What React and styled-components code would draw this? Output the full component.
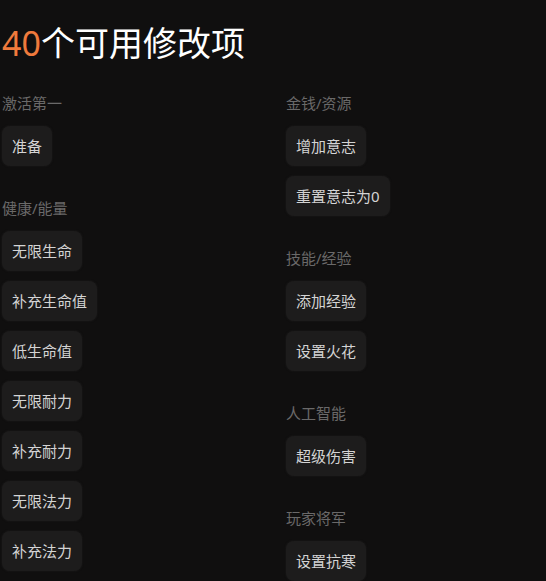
import React from "react";
import styled, { createGlobalStyle } from "styled-components";

const Global = createGlobalStyle`
  html, body { margin: 0; padding: 0; background: #100f0f; overflow: hidden; }
  body { font-family: "Noto Sans", "Noto Sans CJK SC", sans-serif; color: #d6d6d6; }
`;

const Page = styled.div`
  padding: 23px 2px 0 2px;
  height: 581px;
  box-sizing: border-box;
  background: #100f0f;
  overflow: hidden;
`;

const Title = styled.h1`
  margin: 0 0 29px 0;
  font-size: 34px;
  line-height: 41px;
  font-weight: 400;
  color: #ffffff;
`;

const Count = styled.span`
  color: #f07a3c;
`;

const Columns = styled.div`
  display: grid;
  grid-template-columns: 284px 1fr;
  align-items: start;
`;

const Column = styled.div`
  display: flex;
  flex-direction: column;
  gap: 22px;
`;

const Section = styled.section`
  display: flex;
  flex-direction: column;
  align-items: flex-start;
`;

const Label = styled.div`
  font-size: 15px;
  line-height: 20px;
  color: #6a6969;
  margin-bottom: 13px;
`;

const Button = styled.button`
  height: 40px;
  padding: 0 10px;
  margin-bottom: 10px;
  border: none;
  border-radius: 8px;
  background: #1d1c1c;
  box-shadow: 0 0 2px rgba(40, 40, 40, 0.6);
  color: #d4d4d4;
  font-family: inherit;
  font-size: 15px;
  line-height: 40px;
  cursor: pointer;
`;

const left = [
  { title: "激活第一", items: ["准备"] },
  {
    title: "健康/能量",
    items: ["无限生命", "补充生命值", "低生命值", "无限耐力", "补充耐力", "无限法力", "补充法力"],
  },
];

const right = [
  { title: "金钱/资源", items: ["增加意志", "重置意志为0"] },
  { title: "技能/经验", items: ["添加经验", "设置火花"] },
  { title: "人工智能", items: ["超级伤害"] },
  { title: "玩家将军", items: ["设置抗寒"] },
];

const renderColumn = (sections) => (
  <Column>
    {sections.map((s) => (
      <Section key={s.title}>
        <Label>{s.title}</Label>
        {s.items.map((it) => (
          <Button key={it}>{it}</Button>
        ))}
      </Section>
    ))}
  </Column>
);

export default function App() {
  return (
    <>
      <Global />
      <Page>
        <Title>
          <Count>40</Count>个可用修改项
        </Title>
        <Columns>
          {renderColumn(left)}
          {renderColumn(right)}
        </Columns>
      </Page>
    </>
  );
}
